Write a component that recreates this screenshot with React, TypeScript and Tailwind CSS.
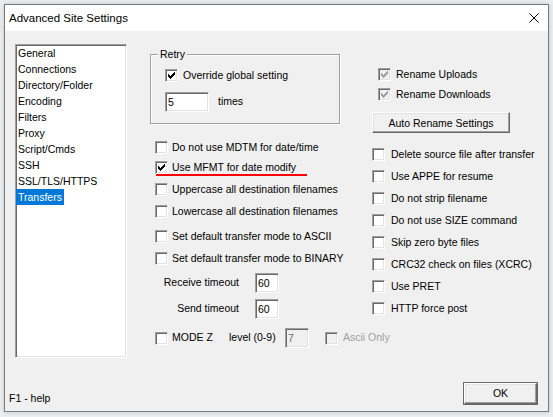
import React from "react";

const sunken =
  "border border-t-[#a0a0a0] border-l-[#a0a0a0] border-r-white border-b-white shadow-[inset_1px_1px_0_#696969,inset_-1px_-1px_0_#e3e3e3]";

const raised =
  "border border-t-white border-l-white border-r-[#696969] border-b-[#696969] shadow-[inset_-1px_-1px_0_#a0a0a0,inset_1px_1px_0_#e3e3e3] bg-[#f0f0f0]";

const Check = ({ checked, disabled }: { checked?: boolean; disabled?: boolean }) => (
  <div className={`w-[13px] h-[13px] shrink-0 ${sunken} ${disabled ? "bg-[#f0f0f0]" : "bg-white"}`}>
    {checked && (
      <svg width="11" height="11" viewBox="0 0 11 11" shapeRendering="crispEdges" className="block">
        <path
          d="M2 4h1v3H2z M3 5h1v3H3z M4 6h1v3H4z M5 5h1v3H5z M6 4h1v3H6z M7 3h1v3H7z M8 2h1v3H8z"
          fill={disabled ? "#a0a0a0" : "#000"}
        />
      </svg>
    )}
  </div>
);

const CheckRow = ({
  label,
  checked,
  disabled,
  dimText,
  gap = "ml-[4px]",
  className = "",
  children,
}: {
  label: string;
  checked?: boolean;
  disabled?: boolean;
  dimText?: boolean;
  gap?: string;
  className?: string;
  children?: React.ReactNode;
}) => (
  <div className={`relative flex items-center h-[13px] ${className}`}>
    <Check checked={checked} disabled={disabled} />
    <span className={`${gap} shrink-0 leading-[13px] whitespace-nowrap ${dimText ? "text-[#a0a0a0]" : ""}`}>
      {label}
    </span>
    {children}
  </div>
);

const Edit = ({ value, width, disabled }: { value: string; width: string; disabled?: boolean }) => (
  <div
    className={`${width} h-[20px] shrink-0 ${sunken} pl-[2px] leading-[18px] ${
      disabled ? "bg-[#f0f0f0] text-[#6d6d6d]" : "bg-white"
    }`}
  >
    {value}
  </div>
);

const pages = [
  "General",
  "Connections",
  "Directory/Folder",
  "Encoding",
  "Filters",
  "Proxy",
  "Script/Cmds",
  "SSH",
  "SSL/TLS/HTTPS",
  "Transfers",
];

const rightOptions = [
  "Delete source file after transfer",
  "Use APPE for resume",
  "Do not strip filename",
  "Do not use SIZE command",
  "Skip zero byte files",
  "CRC32 check on files (XCRC)",
  "Use PRET",
  "HTTP force post",
];

export default function App() {
  return (
    <div className="w-[553px] h-[417px] bg-[#eceef1] pt-[4px] pl-[4px] font-['Liberation_Sans',Arial,sans-serif] text-[10.5px] text-black">
      <div className="w-[545px] h-[408px] border border-[#7a7a7a] bg-[#f0f0f0] flex flex-col shadow-[0_0_5px_rgba(0,0,0,0.18)]">
        {/* title bar */}
        <div className="h-[26px] shrink-0 bg-white flex items-center justify-between pl-[4px] pr-[9px]">
          <span className="text-[11.5px] leading-[14px]">Advanced Site Settings</span>
          <svg width="10" height="10" viewBox="0 0 10 10" className="block">
            <path d="M0.5 0.5L9.5 9.5M9.5 0.5L0.5 9.5" stroke="#000" strokeWidth="1" />
          </svg>
        </div>

        <div className="flex flex-col flex-1">
          <div className="flex pl-[10px] pt-[13px]">
            {/* page list */}
            <div className={`w-[112px] h-[314px] shrink-0 bg-white ${sunken} border-r-[#e3e3e3] border-b-[#e3e3e3]`}>
              {pages.map((p) => (
                <div key={p} className="h-[16px] leading-[16px]">
                  <span
                    className={`inline-block px-[2px] ${p === "Transfers" ? "bg-[#0078d7] text-white" : ""}`}
                  >
                    {p}
                  </span>
                </div>
              ))}
            </div>

            {/* middle column */}
            <div className="ml-[23px] w-[222px] shrink-0 flex flex-col">
              <div className="relative mt-[10px] w-[190px] h-[70px] border border-[#a0a0a0] shadow-[inset_1px_1px_0_#fff,1px_1px_0_#fff] pl-[14px] pt-[14px]">
                <span className="absolute -top-[7px] left-[7px] bg-[#f0f0f0] px-[2px] leading-[13px]">Retry</span>
                <CheckRow checked label="Override global setting" gap="ml-[5px]" />
                <div className="flex items-center mt-[10px]">
                  <Edit value="5" width="w-[44px]" />
                  <span className="ml-[9px]">times</span>
                </div>
              </div>

              <CheckRow label="Do not use MDTM for date/time" className="ml-[5px] mt-[17px]" />
              <CheckRow checked label="Use MFMT for date modify" className="ml-[5px] mt-[7px]">
                <div className="absolute left-[1px] top-[13px] w-[151px] h-[2px] bg-[#ff0000]" />
              </CheckRow>
              <CheckRow label="Uppercase all destination filenames" className="ml-[5px] mt-[9px]" />
              <CheckRow label="Lowercase all destination filenames" className="ml-[5px] mt-[9px]" />
              <CheckRow label="Set default transfer mode to ASCII" className="ml-[5px] mt-[12px]" />
              <CheckRow label="Set default transfer mode to BINARY" className="ml-[5px] mt-[9px]" />

              <div className="flex items-center mt-[8px]">
                <span className="w-[89px] shrink-0 text-right whitespace-nowrap">Receive timeout</span>
                <div className="ml-[16px]">
                  <Edit value="60" width="w-[24px]" />
                </div>
              </div>
              <div className="flex items-center mt-[6px]">
                <span className="w-[89px] shrink-0 text-right whitespace-nowrap">Send timeout</span>
                <div className="ml-[16px]">
                  <Edit value="60" width="w-[24px]" />
                </div>
              </div>

              <div className="flex items-center h-[20px] mt-[9px] ml-[5px] whitespace-nowrap">
                <Check />
                <span className="ml-[4px] w-[57px] shrink-0">MODE Z</span>
                <span className="w-[56px] shrink-0">level (0-9)</span>
                <Edit value="7" width="w-[24px]" disabled />
                <div className="ml-[16px] shrink-0">
                  <Check disabled />
                </div>
                <span className="ml-[5px] shrink-0 text-[#a0a0a0]">Ascii Only</span>
              </div>
            </div>

            {/* right column */}
            <div className="flex flex-col">
              <CheckRow checked disabled label="Rename Uploads" gap="ml-[5px]" className="ml-[6px] mt-[24px]" />
              <CheckRow checked disabled label="Rename Downloads" gap="ml-[5px]" className="ml-[6px] mt-[7px]" />
              <button className={`mt-[11px] w-[138px] h-[21px] ${raised} leading-[18px] text-center`}>
                Auto Rename Settings
              </button>
              <div className="flex flex-col gap-[9px] mt-[15px]">
                {rightOptions.map((o) => (
                  <CheckRow key={o} label={o} gap="ml-[6px]" />
                ))}
              </div>
            </div>
          </div>

          {/* footer */}
          <div className="mt-auto flex items-end justify-between pl-[4px] pr-[10px] pb-[6px]">
            <span className="leading-[13px]">F1 - help</span>
            <div className="w-[75px] h-[23px] border border-[#696969]">
              <div className={`w-full h-full ${raised} leading-[19px] text-center`}>OK</div>
            </div>
          </div>
        </div>
      </div>
    </div>
  );
}
